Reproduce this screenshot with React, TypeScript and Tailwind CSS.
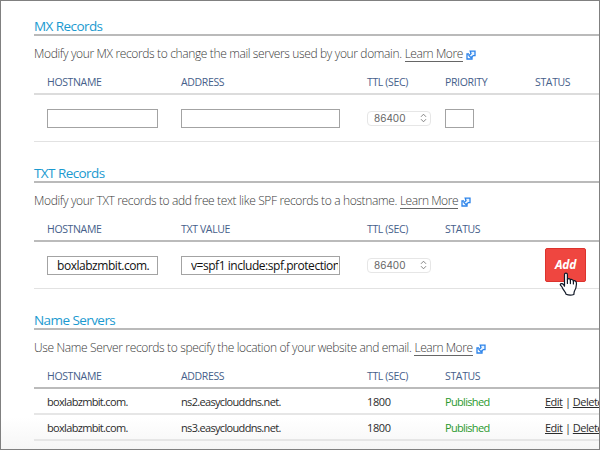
import React from "react";

function ExternalIcon() {
  return (
    <svg width="10" height="10" viewBox="0 0 10 10" className="mt-[2px] ml-[3px] shrink-0" fill="none" stroke="#2b83ea" strokeWidth="1.3">
      <path d="M3 4H1V9H6V7" />
      <path d="M4.2 1.2H9V5.6H7.4L5 7.6L3 5.6L5 3.6Z" fill="#e9f4ff" />
    </svg>
  );
}

function Heading({ children, className }: { children: React.ReactNode; className: string }) {
  return (
    <h2 className={`flex items-end border-b-2 border-[#bababa] text-[13.5px] leading-[16px] tracking-[-0.57px] text-[#1b9ad0] ${className}`}>
      <span>{children}</span>
    </h2>
  );
}

function Description({ children, className }: { children: React.ReactNode; className: string }) {
  return (
    <p className={`flex h-[36px] items-center text-[12px] leading-[18px] font-[340] text-[#3a3a3a] ${className}`}>
      <span>{children}</span>
      <a className="ml-[3px] h-[16px] border-b border-[#666] leading-[16px] tracking-[-0.45px]">Learn More</a>
      <ExternalIcon />
    </p>
  );
}

function HeaderRow({ labels, className }: { labels: string[]; className: string }) {
  return (
    <div className={`grid grid-cols-[134px_186px_78px_90px_1fr] border-b-2 pl-[13px] text-[10.5px] leading-[21px] tracking-[-0.35px] text-[#46608a] ${className}`}>
      {labels.map((label, i) => (
        <span key={i}>{label}</span>
      ))}
    </div>
  );
}

function Field({ className, value }: { className: string; value?: string }) {
  return (
    <div className={`h-[19px] border border-[#a3a3a3] bg-white pr-px pl-[9px] text-[12px] leading-[18px] tracking-[-0.46px] text-[#111] ${className}`}>
      <div className="overflow-hidden">{value}</div>
    </div>
  );
}

function TtlSelect() {
  return (
    <div className="flex h-[15px] w-[64px] items-center justify-between rounded-[4px] border border-[#e6e6e6] pr-[3px] pl-[6px] font-['Inter',sans-serif] text-[10px] text-[#666]">
      <span>86400</span>
      <svg width="7" height="10" viewBox="0 0 7 10" fill="none" stroke="#777" strokeWidth="0.9">
        <path d="M1 3.8L3.5 1.2L6 3.8M1 6.2L3.5 8.8L6 6.2" />
      </svg>
    </div>
  );
}

function HandCursor() {
  return (
    <svg width="19" height="24" viewBox="0 0 19 24" className="absolute top-[23px] left-[13px]" fill="#fff" stroke="#111827" strokeWidth="1.2" strokeLinejoin="round" strokeLinecap="round">
      <path d="M5.5 14.2V2.6C5.5 .6 8.4 .6 8.4 2.6V7.6C8.6 6.2 11.2 6.2 11.4 8.1C11.8 7 14.2 7.3 14.4 9.2C15 8.3 17.2 8.6 17.4 10.8C17.7 14.5 17 16.4 15.4 19.2C15 20.1 15 21.6 14.8 22.5C12.4 23.4 9.4 23.2 7 22.3C6.8 20 4.6 18.6 3.6 16.2C2.8 14.4 1.5 13.6 1.2 12.6C1.8 10.8 4.4 11.4 5.5 14.2Z" />
      <path d="M8.4 7.6V11.4M11.4 8.1V11.6M14.4 9.2V12" fill="none" />
    </svg>
  );
}

function ServerRow({ host }: { host: string }) {
  return (
    <div className="grid h-[26px] grid-cols-[134px_186px_78px_100px_1fr] border-b-2 border-[#e6e6e6] pl-[13px] text-[11px] leading-[25px] tracking-[-0.67px] text-[#2c2c2c]">
      <span>boxlabzmbit.com.</span>
      <span>{host}</span>
      <span className="tracking-[-0.4px]">1800</span>
      <span className="text-[#2a992d]">Published</span>
      <span className="tracking-[-0.5px]">
        <a className="underline">Edit</a> | <a className="underline">Delete</a>
      </span>
    </div>
  );
}

export default function App() {
  return (
    <div className="h-[450px] w-[600px] overflow-hidden border border-[#808080] bg-linear-to-b from-white from-93% to-[#f6f6f6] pl-[33px] font-['Open_Sans',sans-serif] whitespace-nowrap">
      <section>
        <Heading className="h-[35px]">MX Records</Heading>
        <Description className="tracking-[-0.36px]">Modify your MX records to change the mail servers used by your domain.</Description>
        <HeaderRow className="h-[23px] border-[#dcdcdc]" labels={["HOSTNAME", "ADDRESS", "TTL (SEC)", "PRIORITY", "STATUS"]} />
        <div className="grid h-[47px] grid-cols-[134px_186px_78px_1fr] items-center border-b border-[#e2e2e2] pl-[13px]">
          <Field className="w-[111px]" />
          <Field className="w-[159px]" />
          <TtlSelect />
          <Field className="w-[29px]" />
        </div>
      </section>
      <section>
        <Heading className="h-[41px]">TXT Records</Heading>
        <Description className="tracking-[-0.36px]">Modify your TXT records to add free text like SPF records to a hostname.</Description>
        <HeaderRow className="h-[23px] border-[#bbb]" labels={["HOSTNAME", "TXT VALUE", "TTL (SEC)", "STATUS"]} />
        <div className="grid h-[47px] grid-cols-[134px_186px_78px_100px_1fr] items-center border-b border-[#e2e2e2] pl-[13px]">
          <Field className="w-[111px]" value="boxlabzmbit.com." />
          <Field className="w-[159px]" value="v=spf1 include:spf.protection.outlook.com" />
          <TtlSelect />
          <span />
          <div className="relative h-[34px] w-[41px] rounded-[2px] border border-[#dc332d] bg-[#ef4640] text-center text-[12px] leading-[32px] font-bold tracking-[-0.2px] text-white italic">
            Add
            <HandCursor />
          </div>
        </div>
      </section>
      <section>
        <Heading className="h-[41px]">Name Servers</Heading>
        <Description className="tracking-[-0.35px]">Use Name Server records to specify the location of your website and email.</Description>
        <HeaderRow className="h-[23px] border-[#bbb]" labels={["HOSTNAME", "ADDRESS", "TTL (SEC)", "STATUS"]} />
        <ServerRow host="ns2.easyclouddns.net." />
        <ServerRow host="ns3.easyclouddns.net." />
      </section>
    </div>
  );
}
